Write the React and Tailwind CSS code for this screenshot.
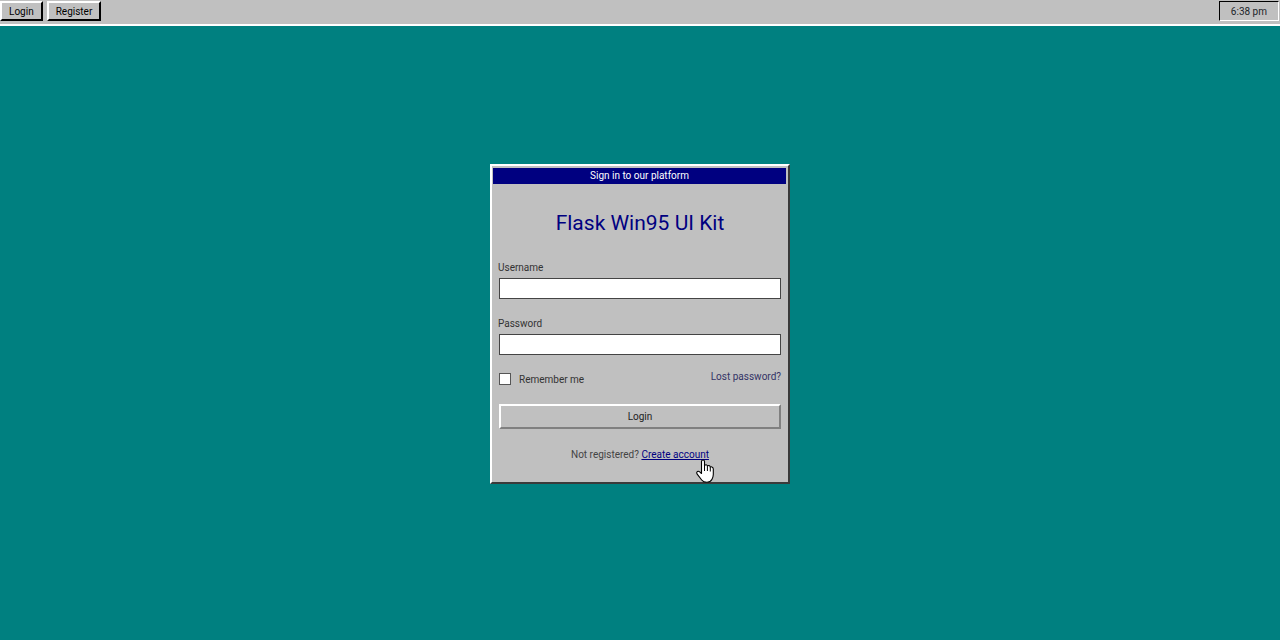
import React from 'react';

function NavLink({ children }) {
  return (
    <a
      href="#"
      className="flex h-5 items-center border-2 border-t-white border-l-white border-r-black border-b-black px-[7px] text-[10px] text-black"
    >
      {children}
    </a>
  );
}

function TopBar() {
  return (
    <header className="flex h-[26px] items-start justify-between border-b-2 border-white bg-[#c0c0c0] pt-px pr-px">
      <nav className="flex gap-1">
        <NavLink>Login</NavLink>
        <NavLink>Register</NavLink>
      </nav>
      <time className="flex h-5 items-center border border-t-black border-l-black border-r-white border-b-white px-[11px] text-[10px] text-[#212529]">
        6:38 pm
      </time>
    </header>
  );
}

function Field({ id, label, type }) {
  return (
    <div className="flex flex-col gap-[2px]">
      <label htmlFor={id} className="h-4 text-[10px] leading-4 text-[#333]">
        {label}
      </label>
      <input
        id={id}
        type={type}
        className="mx-px h-[21px] border border-[#444] bg-white px-2 text-[10px] outline-none"
      />
    </div>
  );
}

function HandCursor() {
  return (
    <svg
      aria-hidden="true"
      viewBox="0 0 18 24"
      className="pointer-events-none absolute top-[14px] right-[-5px] h-6 w-[18px]"
    >
      <path
        d="M5.5 14.5V2.5Q5.5 1 7 1Q8.5 1 8.5 2.5V7Q9 5.6 10.2 5.8Q11.3 6 11.4 7.3Q12 6.2 13.1 6.5Q14.2 6.8 14.3 8.2Q15 7.4 16 7.9Q17.3 8.5 17.3 10V15.5Q17.2 18 16 20.3Q14.5 23.3 11 23.3Q7.4 23.3 5.7 21L1.2 15.2Q.2 13.5 1.3 12.6Q2.5 11.9 3.7 12.9Z"
        fill="white"
        stroke="black"
        strokeWidth="1.1"
        strokeLinejoin="round"
      />
      <path d="M8.5 7V12M11.4 7.3V12M14.3 8.2V12.5" fill="none" stroke="black" />
    </svg>
  );
}

function SignInWindow() {
  return (
    <section className="w-[300px] border-2 border-t-white border-l-white border-r-[#3a3a3a] border-b-[#3a3a3a] bg-[#c0c0c0]">
      <h2 className="mt-[2px] mr-[2px] ml-px h-4 bg-[#000080] text-center text-[10px] leading-4 text-white">
        Sign in to our platform
      </h2>
      <h1 className="mt-[21px] text-center text-[21px] leading-9 text-[#000080]">
        Flask Win95 UI Kit
      </h1>
      <form
        className="flex flex-col px-[6px] pt-[19px] pb-[17px]"
        onSubmit={(event) => event.preventDefault()}
      >
        <div className="flex flex-col gap-[17px]">
          <Field id="username" label="Username" type="text" />
          <Field id="password" label="Password" type="password" />
        </div>
        <div className="mx-px mt-3 flex h-6 items-start justify-between">
          <label
            htmlFor="remember"
            className="flex h-6 items-center gap-2 text-[10px] text-[#333]"
          >
            <input
              id="remember"
              type="checkbox"
              className="size-3 appearance-none border border-[#555] bg-white checked:bg-[#000080]"
            />
            Remember me
          </label>
          <a href="#" className="text-[10px] leading-5 text-[#333366]">
            Lost password?
          </a>
        </div>
        <button
          type="submit"
          className="mx-px mt-[13px] h-[25px] border-2 border-t-white border-l-white border-r-[#808080] border-b-[#808080] text-[10px] text-[#222]"
        >
          Login
        </button>
        <p className="mt-4 text-center text-[10px] leading-5 text-[#444]">
          Not registered?{' '}
          <a href="#" className="relative inline-block text-[#000080] underline">
            Create account
            <HandCursor />
          </a>
        </p>
      </form>
    </section>
  );
}

export default function App() {
  return (
    <div className="flex min-h-screen flex-col bg-[#008080] font-[Roboto,sans-serif]">
      <TopBar />
      <main className="flex flex-1 items-center justify-center pb-[18px]">
        <SignInWindow />
      </main>
    </div>
  );
}
